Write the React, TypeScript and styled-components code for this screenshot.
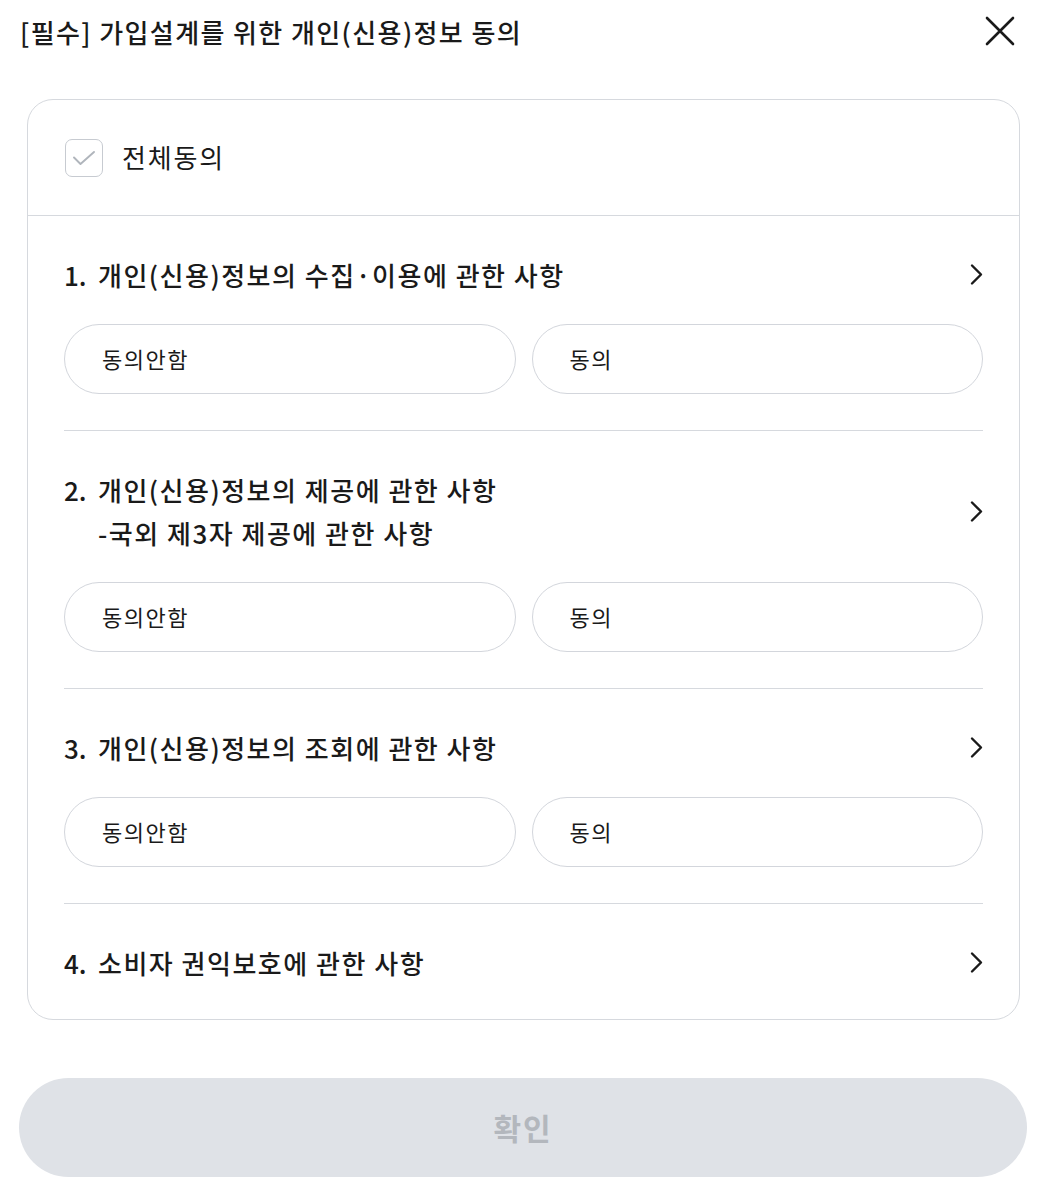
import React from 'react';
import styled, { createGlobalStyle } from 'styled-components';

const GlobalStyle = createGlobalStyle`
  body {
    margin: 0;
    background: #fff;
    font-family: "Noto Sans CJK KR", "Noto Sans", sans-serif;
    color: #1a1a1a;
  }
`

const Page = styled.div`
  width: 1038px;
  padding: 0 11px 0 19px;
  box-sizing: border-box;
`

const Header = styled.div`
  display: flex;
  align-items: center;
  justify-content: space-between;
  height: 62px;
  padding-left: 1px;
`

const Title = styled.h1`
  margin: 0;
  font-size: 26px;
  font-weight: 500;
  letter-spacing: 1.4px;
  color: #1a1a1a;
`

const CloseButton = styled.button`
  border: 0;
  background: none;
  padding: 0;
  width: 30px;
  height: 30px;
  margin-right: 12px;
  display: flex;
  align-items: center;
  justify-content: center;
  cursor: pointer;
`

const Card = styled.div`
  margin: 37px 7px 0 8px;
  border: 1px solid #d6d9de;
  border-radius: 26px;
`

const AllRow = styled.label`
  display: flex;
  align-items: center;
  gap: 19px;
  height: 115px;
  padding: 0 37px;
  border-bottom: 1px solid #d6d9de;
`

const CheckBox = styled.span`
  box-sizing: border-box;
  width: 38px;
  height: 38px;
  border: 1.5px solid #c7cbd1;
  border-radius: 7px;
  display: flex;
  align-items: center;
  justify-content: center;
`

const AllText = styled.span`
  font-size: 26px;
  font-weight: 400;
  letter-spacing: 1.8px;
  margin-top: -2px;
`

const Section = styled.div<{ $last?: boolean }>`
  margin: 0 36px;
  padding: 37px 0 ${(p) => (p.$last ? '35px' : '36px')};
  border-bottom: ${(p) => (p.$last ? 'none' : '1px solid #d6d9de')};
`

const SectionHead = styled.div`
  display: flex;
  align-items: center;
  justify-content: space-between;
`

const SectionTitle = styled.div`
  display: flex;
  font-size: 26px;
  font-weight: 500;
  line-height: 43px;
  letter-spacing: 1.5px;
`

const Num = styled.span`
  width: 34px;
  flex-shrink: 0;
  letter-spacing: 0;
`

const Choices = styled.div`
  display: grid;
  grid-template-columns: 1fr 1fr;
  gap: 16px;
  margin-top: 28px;
`

const Choice = styled.button`
  height: 70px;
  border: 1px solid #d3d6dc;
  border-radius: 35px;
  background: #fff;
  text-align: left;
  padding: 0 0 3px 37px;
  font-family: inherit;
  font-size: 22px;
  letter-spacing: 1.5px;
  color: #1a1a1a;
`

const Confirm = styled.button`
  display: block;
  width: 100%;
  height: 99px;
  margin: 58px 0 0 0;
  padding-bottom: 3px;
  border: 0;
  border-radius: 50px;
  background: #dfe2e7;
  color: #b3b7bd;
  font-family: inherit;
  font-size: 30px;
  font-weight: 700;
  letter-spacing: 2px;
`

const Chevron = () => (
  <svg width="14" height="23" viewBox="0 0 14 23" fill="none">
    <path d="M3 2.5l9 9-9 9" stroke="#1a1a1a" strokeWidth="2.4" strokeLinecap="round" strokeLinejoin="round" />
  </svg>
)

const sections = [
  { n: '1.', lines: ['개인(신용)정보의 수집·이용에 관한 사항'], choices: true },
  { n: '2.', lines: ['개인(신용)정보의 제공에 관한 사항', '-국외 제3자 제공에 관한 사항'], choices: true },
  { n: '3.', lines: ['개인(신용)정보의 조회에 관한 사항'], choices: true },
  { n: '4.', lines: ['소비자 권익보호에 관한 사항'], choices: false },
]

export default function App() {
  return (
    <Page>
      <GlobalStyle />
      <Header>
        <Title>[필수] 가입설계를 위한 개인(신용)정보 동의</Title>
        <CloseButton aria-label="닫기">
          <svg width="30" height="30" viewBox="0 0 30 30" fill="none">
            <path d="M2 2l26 26M28 2L2 28" stroke="#1a1a1a" strokeWidth="2.6" strokeLinecap="round" />
          </svg>
        </CloseButton>
      </Header>

      <Card>
        <AllRow>
          <CheckBox>
            <svg width="24" height="16" viewBox="0 0 24 16" fill="none">
              <path d="M2 7.5l6.5 6.5L22 2" stroke="#b0b5bc" strokeWidth="1.9" strokeLinecap="round" strokeLinejoin="round" />
            </svg>
          </CheckBox>
          <AllText>전체동의</AllText>
        </AllRow>

        {sections.map((s, i) => (
          <Section key={s.n} $last={i === sections.length - 1}>
            <SectionHead>
              <SectionTitle>
                <Num>{s.n}</Num>
                <div>
                  {s.lines.map((l) => (
                    <div key={l}>{l}</div>
                  ))}
                </div>
              </SectionTitle>
              <Chevron />
            </SectionHead>
            {s.choices && (
              <Choices>
                <Choice>동의안함</Choice>
                <Choice>동의</Choice>
              </Choices>
            )}
          </Section>
        ))}
      </Card>

      <Confirm>확인</Confirm>
    </Page>
  )
}
